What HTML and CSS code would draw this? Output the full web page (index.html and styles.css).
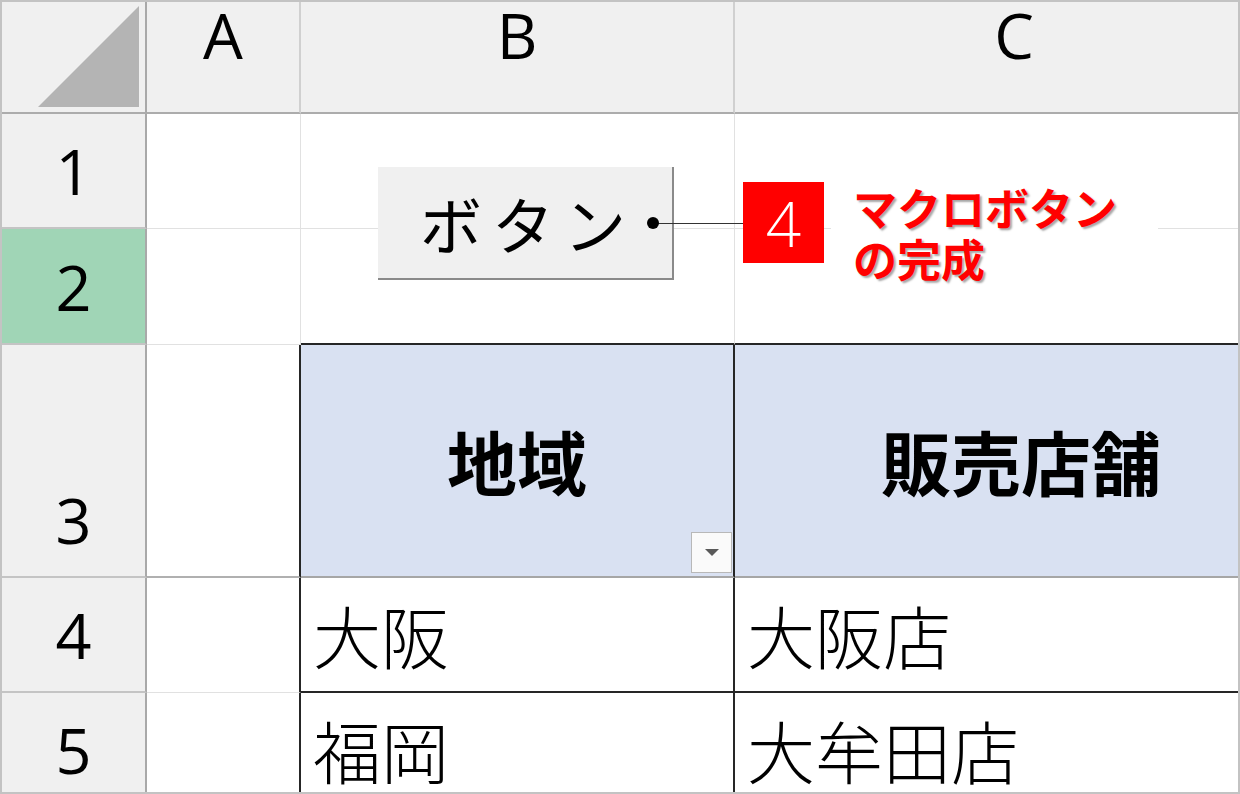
FILE: index.html
```html
<!DOCTYPE html>
<html lang="ja">
<head>
  <meta charset="UTF-8" />
  <meta name="viewport" content="width=device-width, initial-scale=1.0"/>
  <title>マクロボタンの完成</title>
  <link rel="stylesheet" href="styles.css">
</head>
<body>
  <div class="sheet">
    <div class="grid">
      <div class="corner">
        <svg width="143" height="110" viewBox="0 0 143 110"><polygon points="36,105 137,105 137,4" fill="#b4b4b4"/></svg>
      </div>
      <div class="col-head">A</div>
      <div class="col-head">B</div>
      <div class="col-head">C</div>

      <div class="row-head">1</div>
      <div class="cell"></div>
      <div class="cell"></div>
      <div class="cell"></div>

      <div class="row-head selected">2</div>
      <div class="cell"></div>
      <div class="cell table-top"></div>
      <div class="cell table-top"></div>

      <div class="row-head">3</div>
      <div class="cell table-left head-line"></div>
      <div class="cell th">地域<span class="filter"></span></div>
      <div class="cell th shifted">販売店舗</div>

      <div class="row-head">4</div>
      <div class="cell table-left"></div>
      <div class="cell td">大阪</div>
      <div class="cell td">大阪店</div>

      <div class="row-head">5</div>
      <div class="cell table-left"></div>
      <div class="cell td">福岡</div>
      <div class="cell td">大牟田店</div>
    </div>

    <!-- shapes placed over the sheet -->
    <div class="macro-button">ボタン</div>
    <div class="leader"></div>
    <div class="leader-dot"></div>
    <div class="step">4</div>
    <div class="note">マクロボタン<br>の完成</div>
  </div>
</body>
</html>
```

FILE: styles.css
```css
body {
  margin: 0;
  background: #fff;
  overflow: hidden;
}

.sheet {
  position: relative;
  width: 1240px;
  height: 794px;
  box-sizing: border-box;
  border: 2px solid #c3c3c3;
  overflow: hidden;
  background: #fff;
  font-family: 'Open Sans', 'Noto Sans CJK JP', sans-serif;
  color: #000;
}

.grid {
  display: grid;
  grid-template-columns: 145px 154px 434px 560px;
  grid-template-rows: 112px 115px 116px 233px 115px 115px;
}

.grid > div {
  box-sizing: border-box;
}

.corner {
  background: #f0f0f0;
  border-right: 2px solid #a9a9a9;
  border-bottom: 2px solid #acacac;
}

.corner svg {
  display: block;
}

.col-head {
  background: #f0f0f0;
  border-right: 2px solid #d0d0d0;
  border-bottom: 2px solid #acacac;
  text-align: center;
  font-size: 63px;
  line-height: 63px;
  padding-top: 1px;
}

.row-head {
  display: flex;
  align-items: flex-end;
  justify-content: center;
  background: #f0f0f0;
  border-right: 2px solid #a9a9a9;
  border-bottom: 2px solid #c4c4c4;
  font-size: 63px;
  line-height: 63px;
  padding-bottom: 25px;
}

.row-head.selected {
  background: #a0d5b6;
}

.cell {
  position: relative;
  border-right: 1px solid #e1e1e1;
  border-bottom: 1px solid #e1e1e1;
}

.table-top {
  border-bottom: 2px solid #262626;
}

.table-left {
  border-right: 2px solid #262626;
}

.head-line {
  border-bottom: 2px solid #b0b0b0;
}

.th {
  display: flex;
  align-items: center;
  justify-content: center;
  background: #d9e1f2;
  border-right: 2px solid #262626;
  border-bottom: 2px solid #a6a6a6;
  font-family: 'Noto Sans CJK JP', sans-serif;
  font-weight: bold;
  font-size: 70px;
  line-height: 1;
}

.th.shifted {
  padding-left: 14px;
}

.filter {
  position: absolute;
  right: 1px;
  bottom: 3px;
  width: 41px;
  height: 41px;
  box-sizing: border-box;
  background: #fafafa;
  border: 1px solid #b8b8b8;
}

.filter::after {
  content: "";
  position: absolute;
  left: 13px;
  top: 16px;
  border-left: 7px solid transparent;
  border-right: 7px solid transparent;
  border-top: 7px solid #595959;
}

.td {
  display: flex;
  align-items: center;
  padding-left: 12px;
  border-right: 2px solid #262626;
  border-bottom: 2px solid #262626;
  font-family: 'Noto Sans CJK JP', sans-serif;
  font-weight: 300;
  font-size: 68px;
  line-height: 1;
}

.macro-button {
  position: absolute;
  left: 376px;
  top: 165px;
  width: 296px;
  height: 113px;
  box-sizing: border-box;
  background: #f0f0f0;
  border-right: 2px solid #8a8a8a;
  border-bottom: 2px solid #8a8a8a;
  display: flex;
  align-items: center;
  padding-left: 42px;
  font-family: 'Noto Sans CJK JP', sans-serif;
  font-weight: normal;
  font-size: 62px;
  letter-spacing: 10px;
}

.leader {
  position: absolute;
  left: 651px;
  top: 221px;
  width: 90px;
  height: 1px;
  background: #333;
}

.leader-dot {
  position: absolute;
  left: 645px;
  top: 215px;
  width: 12px;
  height: 12px;
  border-radius: 50%;
  background: #000;
}

.step {
  position: absolute;
  left: 741px;
  top: 180px;
  width: 81px;
  height: 81px;
  background: #ff0000;
  color: #fff;
  display: flex;
  align-items: center;
  justify-content: center;
  font-family: 'Open Sans', sans-serif;
  font-weight: 300;
  font-size: 62px;
  line-height: 1;
}

.note {
  position: absolute;
  left: 829px;
  top: 180px;
  width: 327px;
  padding-left: 22px;
  box-sizing: border-box;
  background: #fff;
  color: #ff0000;
  font-family: 'Noto Sans CJK JP', sans-serif;
  font-weight: bold;
  font-size: 44px;
  line-height: 51px;
  text-shadow: 2px 2px 2px rgba(0, 0, 0, 0.35);
}
```
